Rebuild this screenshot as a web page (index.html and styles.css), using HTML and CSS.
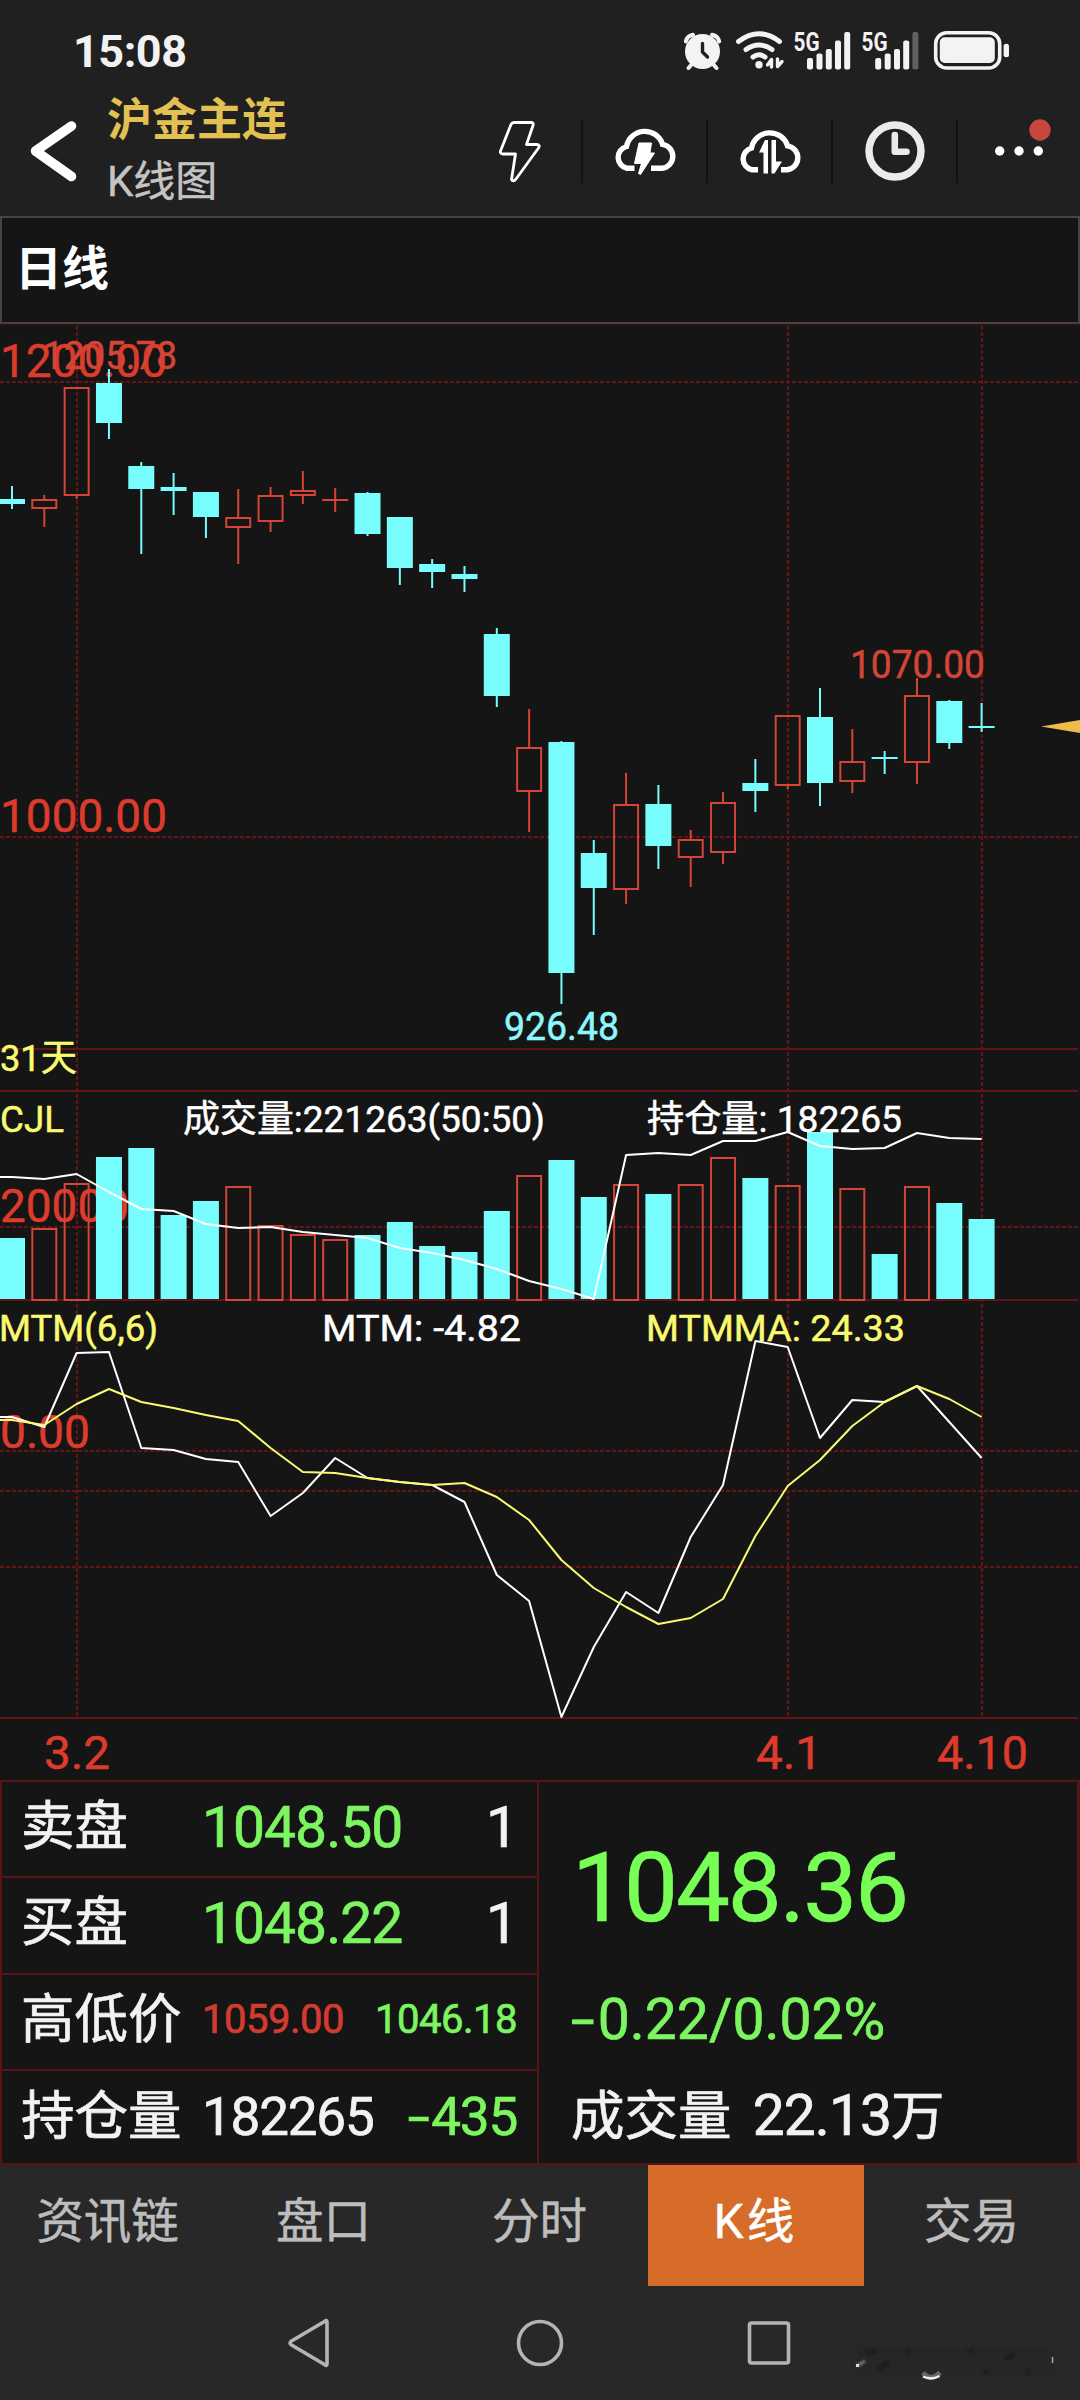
FILE: index.html
```html
<!DOCTYPE html>
<html lang="zh-CN">
<head>
    <meta charset="UTF-8">
    <meta name="viewport" content="width=device-width, initial-scale=1.0">
    <title>沪金主连 K线图</title>
    <link rel="stylesheet" href="styles.css">
</head>
<body>
    <!-- Status bar -->
    <div class="status-bar">
        <span class="clock">15:08</span>
        <svg class="status-icons" viewBox="680 19 340 54" width="340" height="54">
            <!-- alarm -->
            <g fill="none" stroke="#f3f3f3" stroke-width="4" stroke-linecap="round">
                <circle cx="702.5" cy="51.5" r="17.5" fill="#f3f3f3" stroke="none"/>
                <path d="M685.8 41.5Q687 36 693 34.8M719.2 41.5Q718 36 712 34.8"/>
                <path d="M692 64L688.5 68M713 64L716.5 68"/>
                <path d="M702.5 43.5V52L707.5 57" stroke="#202020" stroke-width="3.4"/>
            </g>
            <!-- wifi -->
            <g fill="none" stroke="#f3f3f3" stroke-width="5" stroke-linecap="round">
                <path d="M738.5 41.5Q759 26 779.5 41.5"/>
                <path d="M746 49.5Q759 40.5 772 49.5"/>
                <path d="M753 57Q759 52.5 765 57"/>
                <circle cx="759" cy="64.7" r="3.7" fill="#f3f3f3" stroke="none"/>
                <path d="M771.5 67V59.5L767.5 65M777.5 59V66.5L782 61.5" stroke-width="3.4" stroke-linejoin="round"/>
            </g>
            <!-- signal 1 -->
            <g fill="#f3f3f3">
                <text class="net" x="793.5" y="50.5" textLength="26" lengthAdjust="spacingAndGlyphs">5G</text>
                <rect x="807" y="58" width="6" height="11.5" rx="2"/>
                <rect x="816.5" y="53.5" width="6" height="16" rx="2"/>
                <rect x="825.8" y="49" width="6" height="20.5" rx="2"/>
                <rect x="835" y="40.5" width="6" height="29" rx="2"/>
                <rect x="844.2" y="32" width="6" height="37.5" rx="2"/>
            </g>
            <!-- signal 2 -->
            <g fill="#f3f3f3">
                <text class="net" x="861.5" y="50.5" textLength="26" lengthAdjust="spacingAndGlyphs">5G</text>
                <rect x="875.2" y="58" width="6" height="11.5" rx="2"/>
                <rect x="884.7" y="53.5" width="6" height="16" rx="2"/>
                <rect x="894" y="49" width="6" height="20.5" rx="2"/>
                <rect x="903.2" y="40.5" width="6" height="29" rx="2"/>
                <rect x="912.4" y="32" width="6" height="37.5" rx="2" fill="#606060"/>
            </g>
            <!-- battery -->
            <rect x="935.7" y="32.8" width="64" height="35.2" rx="11" fill="none" stroke="#f3f3f3" stroke-width="3.6"/>
            <rect x="939.8" y="37.3" width="55" height="25.7" rx="5" fill="#f3f3f3"/>
            <rect x="1003.6" y="43.7" width="5.4" height="13.5" rx="2.5" fill="#f3f3f3"/>
        </svg>
    </div>

    <!-- Title bar -->
    <div class="header">
        <svg class="back" width="50" height="64" viewBox="0 0 50 64">
            <path d="M43.5 7L7.5 32L43.5 57.5" fill="none" stroke="#fff" stroke-width="9.5" stroke-linecap="round" stroke-linejoin="round"/>
        </svg>
        <div class="titles">
            <h1>沪金主连</h1>
            <p>K线图</p>
        </div>
        <div class="tools">
            <div class="tool">
                <svg width="42" height="64" viewBox="0 0 42 64">
                    <path d="M15 3.5H32Q35 3.5 34 6.5L27.5 25.5H38Q41.5 26 39.5 29L17 60Q14 63.5 12.5 60.5L16.5 35H3.5Q1 34.5 1.5 32L12 5.5Q13 3.5 15 3.5Z" fill="none" stroke="#fff" stroke-width="2.8" stroke-linejoin="round"/>
                </svg>
            </div>
            <div class="tool">
                <svg width="64" height="64" viewBox="0 0 64 64">
                    <path d="M21.5 49.3H14A11.2 11.2 0 0 1 13.5 27.5A18.6 18.6 0 0 1 49.5 25.3A12.1 12.1 0 0 1 49 49.3H38" fill="none" stroke="#fff" stroke-width="5.4"/>
                    <path d="M26 24H38.5L37 34H41.5L27.5 55.5L25.5 54.5L28.5 44.5H21.5Z" fill="#fff" stroke="#fff" stroke-linejoin="round"/>
                </svg>
            </div>
            <div class="tool">
                <svg width="64" height="64" viewBox="0 0 64 64">
                    <path d="M20 50.8H14A11.2 11.2 0 0 1 13.5 29A18.6 18.6 0 0 1 49.5 26.8A12.1 12.1 0 0 1 49 50.8H43" fill="none" stroke="#fff" stroke-width="5.4"/>
                    <path d="M27 21H30V54.5H25.5V33.5H21ZM33.5 21H38V42.5H44L36.5 54.5H33.5Z" fill="#fff"/>
                </svg>
            </div>
            <div class="tool">
                <svg width="64" height="64" viewBox="0 0 64 64">
                    <circle cx="32" cy="32" r="26" fill="none" stroke="#ebebe9" stroke-width="7.4"/>
                    <path d="M31.8 16V32.8H43.5" fill="none" stroke="#ebebe9" stroke-width="6.6" stroke-linecap="round" stroke-linejoin="round"/>
                </svg>
            </div>
            <div class="tool">
                <svg width="64" height="64" viewBox="0 0 64 64">
                    <g fill="#fff">
                        <circle cx="12.7" cy="32" r="4.7"/>
                        <circle cx="32" cy="32" r="4.7"/>
                        <circle cx="51.3" cy="32" r="4.7"/>
                    </g>
                    <circle cx="53" cy="11" r="10.7" fill="#c9463d"/>
                </svg>
            </div>
        </div>
    </div>

    <div class="period">日线</div>

    <svg class="chart" id="chart" viewBox="0 324 1080 1456" width="1080" height="1456"></svg>

    <!-- Quote panel -->
    <div class="quote">
        <div class="quote-left">
            <div class="row"><span class="label">卖盘</span><span class="price green">1048.50</span><span class="qty">1</span></div>
            <div class="row"><span class="label">买盘</span><span class="price green">1048.22</span><span class="qty">1</span></div>
            <div class="row"><span class="label">高低价</span><span class="small red">1059.00</span><span class="small green last">1046.18</span></div>
            <div class="row"><span class="label">持仓量</span><span class="vol">182265</span><span class="vol green last"><span class="minus">-</span>435</span></div>
        </div>
        <div class="quote-right">
            <div class="now">1048.36</div>
            <div class="change"><span class="minus">-</span>0.22/0.02%</div>
            <div class="total">成交量 <span>22.13</span>万</div>
        </div>
    </div>

    <!-- Bottom tabs -->
    <div class="tabs">
        <div class="tab">资讯链</div>
        <div class="tab">盘口</div>
        <div class="tab">分时</div>
        <div class="tab active">K线</div>
        <div class="tab">交易</div>
    </div>

    <div class="nav">
        <svg width="48" height="52" viewBox="0 0 48 52">
            <path d="M42 5V47Q42 49.5 39.5 47.5L6.5 28Q3.5 26 6.5 24L39.5 4.5Q42 2.5 42 5Z"/>
        </svg>
        <svg width="52" height="52" viewBox="0 0 52 52"><circle cx="26" cy="26" r="21.5"/></svg>
        <svg width="44" height="52" viewBox="0 0 44 52"><rect x="2.5" y="6" width="39" height="40" rx="2"/></svg>
        <svg class="smudge" width="204" height="40" viewBox="0 0 204 40">
            <defs><filter id="soft"><feGaussianBlur stdDeviation="1.2"/></filter></defs>
            <rect x="2" y="3" width="197" height="30" fill="#262626" stroke="none"/>
            <g filter="url(#soft)">
                <path d="M11 9L22 7M24 25L34 18M50 9L56 6M112 8L120 5M150 15L160 10M170 27L176 29M128 29L134 28" stroke="#1f1f1f" stroke-width="4"/>
                <path d="M2 22L10 17" stroke="#777" stroke-width="3"/>
            </g>
            <path d="M1 21.5H4" stroke="#ddd" stroke-width="3"/>
            <path d="M68 28.5Q76 38 85 28.5" stroke="#666" stroke-width="5"/>
            <path d="M68 32.5Q76 36.5 84.5 32" stroke="#eee" stroke-width="2.5"/>
            <path d="M197.500 13V19" stroke="#aaa" stroke-width="1.5"/>
        </svg>
    </div>

    <script src="chart.js"></script>
</body>
</html>
```
FILE: styles.css
```css
* {
    margin: 0;
    padding: 0;
    box-sizing: border-box;
}

body {
    width: 1080px;
    height: 2400px;
    background: #151515;
    color: #f2f2f2;
    font-family: Roboto, "Noto Sans CJK SC", sans-serif;
    overflow: hidden;
}

svg {
    display: block;
}

/* Status bar */
.status-bar {
    height: 87px;
    padding: 0 60px 0 73px;
    background: #202020;
    display: flex;
    justify-content: space-between;
    align-items: flex-start;
}

.clock {
    font-size: 45px;
    font-weight: 700;
    line-height: 53px;
    margin-top: 25px;
    letter-spacing: -0.5px;
}

.status-icons {
    margin-top: 19px;
}

.net {
    font-size: 26px;
    font-weight: 700;
}

/* Title bar */
.header {
    height: 129px;
    background: #202020;
    display: flex;
}

.back {
    flex-shrink: 0;
    margin: 32px 0 0 28px;
}

.titles {
    flex-shrink: 0;
    width: 380px;
    padding: 2px 0 0 29px;
}

.titles h1 {
    font-size: 45px;
    line-height: 64px;
    font-weight: 700;
    color: #e3c052;
}

.titles p {
    font-size: 42px;
    line-height: 58px;
    color: #c4c4c4;
    -webkit-text-stroke: 0.4px #c4c4c4;
}

.tools {
    display: flex;
    margin-top: 32px;
    height: 64px;
}

.tool {
    flex-shrink: 0;
    width: 125px;
    border-right: 2px solid #121212;
    display: flex;
    justify-content: center;
}

.tool:last-child {
    width: 122px;
    border-right: none;
}

.period {
    height: 108px;
    border: 2px solid #444;
    padding-left: 13px;
    font-size: 47px;
    line-height: 102px;
    font-weight: 700;
    color: #fff;
}

/* Quote panel */
.quote {
    height: 385px;
    display: flex;
    border: 2px solid #561413;
    border-right-width: 3px;
    -webkit-text-stroke: 0.7px;
}

.quote-left {
    width: 537px;
    border-right: 2px solid #561413;
}

.row {
    height: 96.3px;
    display: flex;
    align-items: center;
    padding: 0 20px 4px 19px;
    border-bottom: 2px solid #561413;
}

.row:last-child {
    border-bottom: none;
}

.label {
    width: 181px;
    font-size: 53.5px;
    line-height: 78px;
    white-space: nowrap;
}

.price {
    font-size: 57px;
    letter-spacing: -1px;
}

.qty {
    font-size: 57px;
    margin-left: auto;
    margin-right: -1px;
}

.small {
    font-size: 40px;
    letter-spacing: -0.5px;
}

.vol {
    font-size: 53px;
    letter-spacing: -1.2px;
}

.last {
    margin-left: auto;
}

/* wide minus sign */
.minus {
    display: inline-block;
    transform: scaleX(1.5);
    margin-right: 7px;
}

.green {
    color: #7cf560;
}

.red {
    color: #d43b30;
}

.quote-right {
    padding-left: 32px;
}

.now {
    margin-top: 50px;
    padding-left: 1px;
    font-size: 96px;
    line-height: 112px;
    letter-spacing: -2px;
    color: #78ff55;
}

.change {
    margin-top: 43px;
    padding-left: 4px;
    font-size: 57px;
    line-height: 66px;
    color: #7cf560;
}

.total {
    margin-top: 24px;
    font-size: 53.5px;
    line-height: 78px;
}

.total span {
    font-size: 57px;
    letter-spacing: -1px;
    margin-left: 8px;
}

/* Tabs */
.tabs {
    height: 121px;
    background: #282828;
    display: flex;
}

.tab {
    width: 216px;
    padding-right: 1px;
    font-size: 47.5px;
    line-height: 114px;
    text-align: center;
    color: #bdbdbd;
    -webkit-text-stroke: 0.5px;
}

.tab.active {
    background: #d76b2a;
    color: #fff;
    letter-spacing: 3px;
}

/* System navigation */
.nav {
    height: 114px;
    background: #282828;
    display: flex;
    position: relative;
    padding: 31px 0 0 285px;
    gap: 181px;
}

.nav svg {
    fill: none;
    stroke: #b4b4b4;
    stroke-width: 3.6px;
    stroke-linejoin: round;
}

.nav .smudge {
    position: absolute;
    right: 21px;
    bottom: 16px;
}
```
FILE: chart.js
```javascript
const svg = document.getElementById('chart');
const RED = '#d34536';
const CYAN = '#78fdff';
const YELLOW = '#fafa72';
const GRID = '#641414';

const STEP = 32.32;
const px = i => 12 + i * STEP;

// [up, high, bodyTop, bodyBottom, low, volumeTop]
const candles = [
    [0, 486, 499, 504, 509, 1238], [1, 495, 499, 509, 527, 1228], [1, 387, 387, 496, 499, 1183],
    [0, 369, 383, 423, 439, 1157], [0, 462, 466, 489, 554, 1148], [0, 473, 487, 491, 515, 1215],
    [0, 492, 492, 517, 538, 1201], [1, 489, 517, 528, 564, 1186], [1, 487, 495, 522, 532, 1225],
    [1, 471, 490, 496, 504, 1234], [1, 488, 499, 499, 512, 1239], [0, 492, 493, 534, 536, 1235],
    [0, 517, 517, 568, 585, 1222], [0, 559, 564, 572, 588, 1246], [0, 566, 574, 579, 592, 1252],
    [0, 628, 634, 696, 707, 1211], [1, 709, 747, 792, 832, 1175], [0, 741, 742, 973, 1004, 1160],
    [0, 840, 853, 888, 935, 1197], [1, 773, 804, 890, 904, 1184], [0, 785, 804, 846, 869, 1194],
    [1, 830, 839, 858, 887, 1184], [1, 792, 802, 853, 864, 1157], [0, 759, 783, 791, 812, 1178],
    [1, 715, 715, 786, 789, 1185], [0, 688, 717, 783, 806, 1132], [1, 729, 761, 782, 793, 1188],
    [0, 751, 757, 757, 774, 1254], [1, 678, 695, 763, 784, 1186], [0, 700, 701, 743, 749, 1203],
    [0, 703, 726, 726, 732, 1219]
];

const holding = [1177, 1179, 1174, 1192, 1209, 1211, 1224, 1228, 1227, 1232, 1235, 1238, 1248, 1253, 1260, 1269,
    1281, 1289, 1299, 1155, 1153, 1155, 1141, 1141, 1132, 1146, 1149, 1148, 1133, 1138, 1139];
const mtm = [1417, 1427, 1353, 1352, 1448, 1450, 1459, 1462, 1516, 1493, 1458, 1478, 1482, 1485, 1502, 1575,
    1601, 1717, 1647, 1592, 1613, 1537, 1485, 1341, 1347, 1438, 1400, 1402, 1386, 1422, 1458];
const mtmma = [1420, 1425, 1404, 1389, 1402, 1408, 1415, 1421, 1448, 1472, 1473, 1478, 1482, 1485, 1483, 1497,
    1520, 1560, 1588, 1607, 1624, 1618, 1599, 1536, 1486, 1460, 1426, 1402, 1386, 1399, 1417];

let out = '';

function line(x1, y1, x2, y2, color, dash) {
    out += `<line x1="${x1}" y1="${y1}" x2="${x2}" y2="${y2}" stroke="${color}" stroke-width="2"${dash ? ' stroke-dasharray="4 2"' : ''}/>`;
}

function box(i, top, bottom, up) {
    const x = px(i) - 13;
    const h = Math.max(bottom - top, 2);
    if (up && bottom > top) {
        out += `<rect x="${x + 1}" y="${top + 1}" width="24" height="${h - 2}" fill="none" stroke="${RED}" stroke-width="2"/>`;
    } else {
        out += `<rect x="${x}" y="${top}" width="26" height="${h}" fill="${up ? RED : CYAN}"/>`;
    }
}

function curve(values, color) {
    const pts = values.map((y, i) => `${px(i).toFixed(1)},${y}`).join(' ');
    out += `<polyline points="0,${values[0]} ${pts}" fill="none" stroke="${color}" stroke-width="2" stroke-linejoin="round"/>`;
}

function text(x, y, str, size, color, len) {
    out += `<text x="${x}" y="${y}" font-size="${size}" fill="${color}" stroke="${color}" stroke-width="0.5" textLength="${len}" lengthAdjust="spacingAndGlyphs">${str}</text>`;
}

// grid
[382, 837, 1227, 1451, 1491, 1567].forEach(y => line(0, y, 1080, y, GRID, true));
[77, 788, 982].forEach(x => line(x, 326, x, 1717, GRID, true));
[1049, 1091, 1300, 1718].forEach(y => line(0, y, 1078, y, GRID));
line(0, 325, 1080, 325, '#2c1212');

// axis labels
text(0, 377, '1200.00', 46, '#dd3b2c', 167);
text(0, 832, '1000.00', 46, '#dd3b2c', 167);
text(0, 1222, '20000', 46, '#dd3b2c', 129);
text(0, 1447.5, '0.00', 46, '#dd3b2c', 90);
text(44, 1769, '3.2', 46, '#dd3b2c', 66);
text(756, 1769, '4.1', 46, '#dd3b2c', 66);
text(937, 1769, '4.10', 46, '#dd3b2c', 91);

// price candles
candles.forEach(([up, high, top, bottom, low], i) => {
    const c = up ? RED : CYAN;
    if (high < top) line(px(i), high, px(i), top, c);
    if (low > bottom) line(px(i), bottom, px(i), low, c);
    box(i, top, bottom, up);
});
text(43, 369, '1205.78', 38, RED, 134);
text(850, 678, '1070.00', 38, RED, 135);
text(504, 1039.5, '926.48', 38, '#8cf8fb', 115);
out += '<polygon points="1041,726.5 1080,720 1080,733" fill="#eebc4b"/>';

// volume
candles.forEach((c, i) => box(i, c[5], c[0] ? 1301 : 1299, c[0]));
curve(holding, '#fff');

// momentum
curve(mtm, '#fff');
curve(mtmma, YELLOW);

// captions
text(0, 1070.5, '31天', 37, YELLOW, 77);
text(0, 1131.5, 'CJL', 37, YELLOW, 64);
text(183, 1131.5, '成交量:221263(50:50)', 37, '#fff', 362);
text(647, 1131.5, '持仓量: 182265', 37, '#fff', 255);
text(-1, 1340.5, 'MTM(6,6)', 37, YELLOW, 159);
text(322, 1340.5, 'MTM: -4.82', 37, '#fff', 199);
text(646, 1340.5, 'MTMMA: 24.33', 37, YELLOW, 259);

svg.innerHTML = out;
```
